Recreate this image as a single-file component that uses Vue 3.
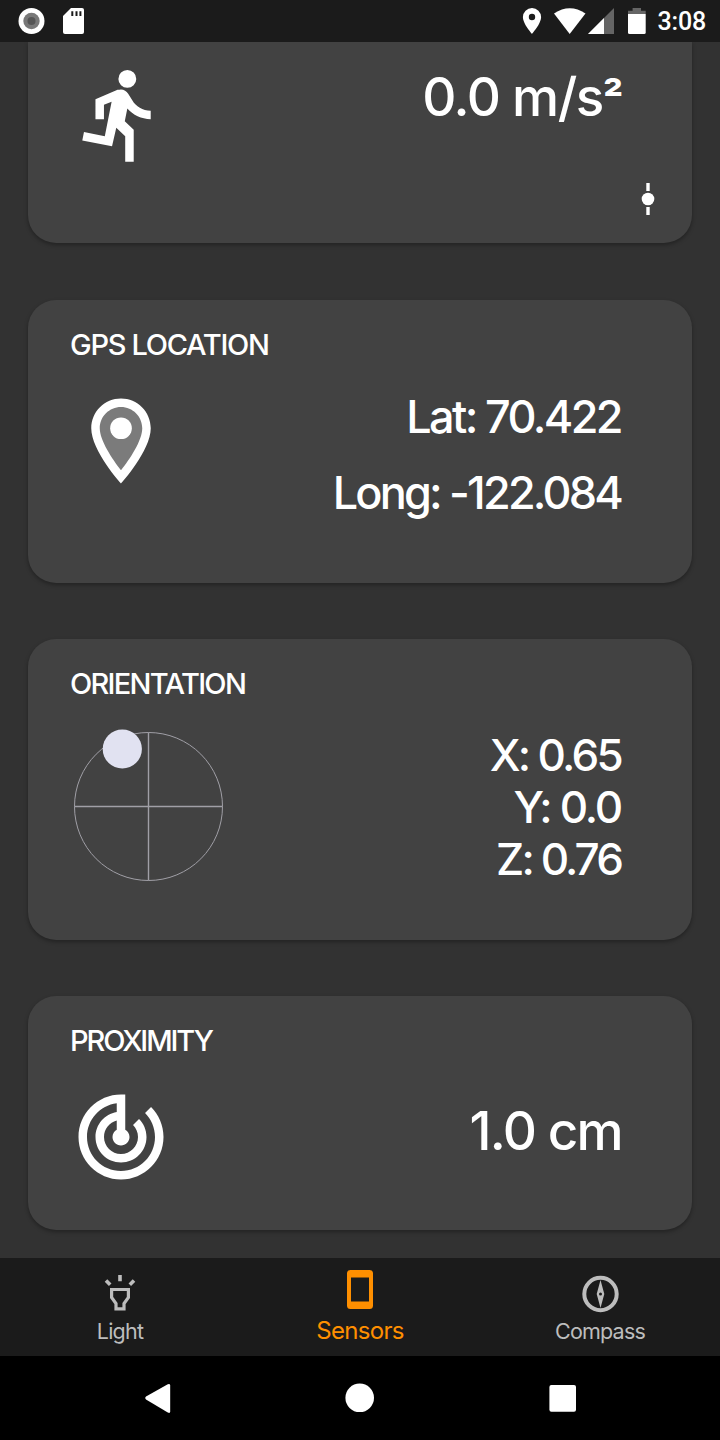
<script setup>
const axes = [
  { text: 'X: 0.65', cls: 'x' },
  { text: 'Y: 0.0', cls: 'y' },
  { text: 'Z: 0.76', cls: 'z' },
]
</script>

<template>
  <div class="screen">
    <header class="status">
      <svg class="status-left" width="100" height="42" viewBox="0 0 100 42">
        <circle cx="31.5" cy="21" r="13" fill="#fff" />
        <circle cx="31.5" cy="21" r="8.2" fill="#787878" />
        <circle cx="31.5" cy="21" r="4" fill="#555" />
        <path d="M71 8h11q2 0 2 2v22q0 2-2 2H65q-2 0-2-2V16z" fill="#fff" />
        <path d="M72.3 11.3v4.6M76.5 11.3v4.6M80.4 11.3v4.6" stroke="#1b1b1b" stroke-width="2" />
      </svg>
      <svg class="status-right" width="130" height="42" viewBox="520 0 130 42">
        <path fill="#fff" fill-rule="evenodd" d="M532 8a9.1 9.1 0 0 0-9.1 9.1C522.900 24 532 34 532 34s9.100-10 9.100-16.900A9.100 9.100 0 0 0 532 8zm0 5.800a3.200 3.200 0 1 1 0 6.400a3.200 3.200 0 0 1 0-6.400z" />
        <path fill="#fff" d="M554 13.600Q569.700 3 585.500 13.600L569.700 34z" />
        <path fill="#656565" d="M614 8v26h-26z" />
        <path fill="#fff" d="M604 18v16h-16z" />
        <path fill="#656565" d="M628 14v-3.300h4.600V8h8.400v2.700h4.700V14z" />
        <path fill="#fff" d="M628 14h17.700v18.500q0 1.500-1.500 1.500h-14.700q-1.500 0-1.500-1.500z" />
      </svg>
      <span class="clock">3:08</span>
    </header>

    <main class="content">
      <section class="card accel">
        <svg class="icon" viewBox="0 0 24 24">
          <path d="M13.490 5.600a2.100 2.100 0 1 0 0-4.200a2.100 2.100 0 0 0 0 4.200zm-3.600 13.780l1-4.400 2.100 2v6h2v-7.500l-2.100-2 .6-3c1.300 1.500 3.300 2.500 5.500 2.500v-2c-1.900 0-3.500-1-4.300-2.400l-1-1.600c-.4-.6-1-1-1.700-1-.3 0-.5.1-.8.1l-5.200 2.200v4.700h2v-3.400l1.800-.7-1.600 8.100-4.900-1-.4 2 7 1.400z" />
        </svg>
        <div class="value big accel-value">0.0 m/s<span class="sq">²</span></div>
        <svg class="slider" width="14" height="34" viewBox="0 0 14 34">
          <circle cx="7" cy="17" r="6.300" />
          <path d="M5.300 1h3.400v8H5.300zM5.300 25h3.400v8H5.300z" />
        </svg>
      </section>

      <section class="card gps">
        <h2 class="t-gps">GPS LOCATION</h2>
        <div class="row">
          <svg class="icon" viewBox="0 0 24 24">
            <path opacity=".3" d="M12 3c-3.300 0-6 2.700-6 6 0 3.500 3.200 8.500 6 11.500 2.800-3 6-8 6-11.500 0-3.300-2.700-6-6-6z" />
            <path fill-rule="evenodd" d="M12 2C8.130 2 5 5.130 5 9c0 5.250 7 13 7 13s7-7.750 7-13c0-3.870-3.130-7-7-7zM7 9c0-2.760 2.240-5 5-5s5 2.240 5 5c0 2.880-2.880 7.190-5 9.880C9.920 16.210 7 11.850 7 9z" />
            <circle cx="12" cy="9" r="2.550" />
          </svg>
          <div class="value coords">
            <div class="lat">Lat: 70.422</div>
            <div class="long">Long: -122.084</div>
          </div>
        </div>
      </section>

      <section class="card orient">
        <h2 class="t-orient">ORIENTATION</h2>
        <div class="row">
          <svg class="dial" width="160" height="160" viewBox="68 727 160 160">
            <g fill="none" stroke="#a09fa6">
              <circle cx="148.500" cy="806.500" r="74" stroke-width="1" />
              <path d="M148.500 732.500v148M74.500 806.500h148" stroke-width="1.400" />
            </g>
            <circle cx="122.300" cy="749" r="19.600" fill="#e1e2f1" />
          </svg>
          <div class="value axes">
            <div v-for="a in axes" :key="a.cls" :class="a.cls">{{ a.text }}</div>
          </div>
        </div>
      </section>

      <section class="card prox">
        <h2 class="t-prox">PROXIMITY</h2>
        <div class="row">
          <svg class="icon" viewBox="0 0 24 24">
            <path d="M19.070 4.930l-1.410 1.410C19.100 7.790 20 9.790 20 12c0 4.420-3.580 8-8 8s-8-3.580-8-8c0-4.080 3.050-7.440 7-7.930v2.020C8.160 6.570 6 9.030 6 12c0 3.310 2.690 6 6 6s6-2.690 6-6c0-1.660-.67-3.160-1.760-4.240l-1.410 1.410C15.550 9.900 16 10.900 16 12c0 2.210-1.790 4-4 4s-4-1.790-4-4c0-1.860 1.280-3.410 3-3.860v2.140c-.6.350-1 .98-1 1.720 0 1.100.9 2 2 2s2-.9 2-2c0-.74-.4-1.380-1-1.720V2h-1C6.480 2 2 6.480 2 12s4.480 10 10 10 10-4.480 10-10c0-2.760-1.120-5.260-2.930-7.070z" />
          </svg>
          <div class="value big prox-value">1.0 cm</div>
        </div>
      </section>
    </main>

    <nav class="tabs">
      <a class="tab">
        <svg width="44" height="44" viewBox="98 1272 44 44">
          <g fill="none" stroke="#bdbdbd">
            <path stroke-width="3.600" d="M120 1275v6.200M106 1280.500l4.200 4.200M134 1280.500l-4.200 4.200" />
            <path stroke-width="3.200" d="M111.600 1289.500h16.800v8l-4.400 6v5.300h-8v-5.300l-4.400-6z" />
          </g>
        </svg>
        <span class="l-light">Light</span>
      </a>
      <a class="tab active">
        <svg width="44" height="44" viewBox="338 1268 44 44">
          <path fill="#ff8f00" fill-rule="evenodd" d="M350.500 1270h19q3.500 0 3.500 3.500v32q0 3.500-3.500 3.500h-19q-3.500 0-3.500-3.500v-32q0-3.500 3.500-3.500zM351 1277.500v24h18v-24z" />
        </svg>
        <span class="l-sensors">Sensors</span>
      </a>
      <a class="tab">
        <svg width="44" height="44" viewBox="578 1272 44 44">
          <circle cx="600.500" cy="1294" r="16.200" fill="none" stroke="#bdbdbd" stroke-width="4" />
          <path fill="#bdbdbd" fill-rule="evenodd" d="M600.500 1280l3.800 14-3.800 14-3.800-14zM600.500 1292.500a1.500 1.500 0 1 0 0 3a1.500 1.500 0 0 0 0-3z" />
        </svg>
        <span class="l-compass">Compass</span>
      </a>
    </nav>

    <footer class="sysbar">
      <svg width="720" height="84" viewBox="0 1356 720 84" fill="#fff">
        <path d="M146 1396.600l21.800-12.300q2.400-1.200 2.400 1.200v25.800q0 2.400-2.400 1.200L146 1399.600q-1.800-1.500 0-3z" />
        <circle cx="359.700" cy="1397.800" r="14.300" />
        <rect x="549.400" y="1385" width="26.600" height="26.800" rx="2" />
      </svg>
    </footer>
  </div>
</template>

<style>
body { background: #000; }
</style>

<style scoped>
* { box-sizing: border-box; }
.screen {
  width: 720px;
  height: 1440px;
  display: flex;
  flex-direction: column;
  overflow: hidden;
  background: #323232;
  color: #fff;
  font-family: Inter, "Open Sans", sans-serif;
}
svg { display: block; flex: none; }
.status {
  height: 42px;
  flex: none;
  display: flex;
  align-items: center;
  background: #1b1b1b;
}
.status-right { margin-left: 420px; }
.clock {
  margin-left: 7.500px;
  padding-top: 2px;
  font: 500 25px/42px Roboto, sans-serif;
  letter-spacing: -0.200px;
  white-space: nowrap;
}
.content {
  flex: 1;
  min-height: 0;
  overflow: hidden;
  padding: 0 28px;
}
.card {
  background: #424242;
  border-radius: 28px;
  box-shadow: 0 2px 4px rgba(0, 0, 0, 0.32);
  padding: 0 70px 0 42px;
  margin-bottom: 56.500px;
}
.icon { width: 102px; height: 102px; fill: #fff; }
.row { display: flex; justify-content: space-between; }
.accel {
  height: 201px;
  border-radius: 0 0 28px 28px;
  display: grid;
  grid-template-columns: 102px 1fr;
  grid-template-rows: 140px 34px;
}
.accel .icon { margin-top: 22px; }
.slider { grid-column: 2; justify-self: end; margin-right: -32.500px; fill: #fff; }
.gps { height: 283px; }
.orient { height: 300.500px; }
.prox { height: 234px; margin-bottom: 0; }
h2 {
  margin: 0;
  padding-top: 27px;
  height: 90px;
  font-size: 29px;
  line-height: 36px;
  font-weight: 500;
  white-space: nowrap;
}
.t-gps { letter-spacing: -1.300px; }
.t-orient { letter-spacing: -1.700px; }
.t-prox { letter-spacing: -2.100px; }
.value {
  text-align: right;
  white-space: nowrap;
  font-weight: 500;
}
.big { font-size: 53px; line-height: 64px; letter-spacing: -1.500px; }
.sq { font-size: 45px; line-height: 1; font-weight: 700; }
.accel-value { padding-top: 23px; }
.coords { font-size: 45px; line-height: 76px; margin-top: -11px; padding-right: 1px; }
.lat { letter-spacing: -2.600px; }
.long { letter-spacing: -2.800px; }
.axes { font-size: 44px; line-height: 52px; padding-right: 1px; }
.x { letter-spacing: -2.700px; }
.y { letter-spacing: -2.200px; }
.z { letter-spacing: -2.900px; }
.dial { margin: -2px 0 0 -2px; }
.prox-value { padding-top: 13px; letter-spacing: -1.700px; }
.tabs {
  flex: none;
  height: 98px;
  display: grid;
  grid-template-columns: repeat(3, 1fr);
  background: #1b1b1b;
}
.tab {
  display: flex;
  flex-direction: column;
  align-items: center;
  padding-top: 14px;
  color: #bdbdbd;
  font-size: 21.500px;
  line-height: 30px;
}
.active { padding-top: 10px; color: #ff8f00; font-size: 24px; }
.tab span { letter-spacing: -0.800px; }
.active span { margin-top: 4px; letter-spacing: -0.700px; }
.sysbar { flex: none; height: 84px; background: #000; }
</style>
